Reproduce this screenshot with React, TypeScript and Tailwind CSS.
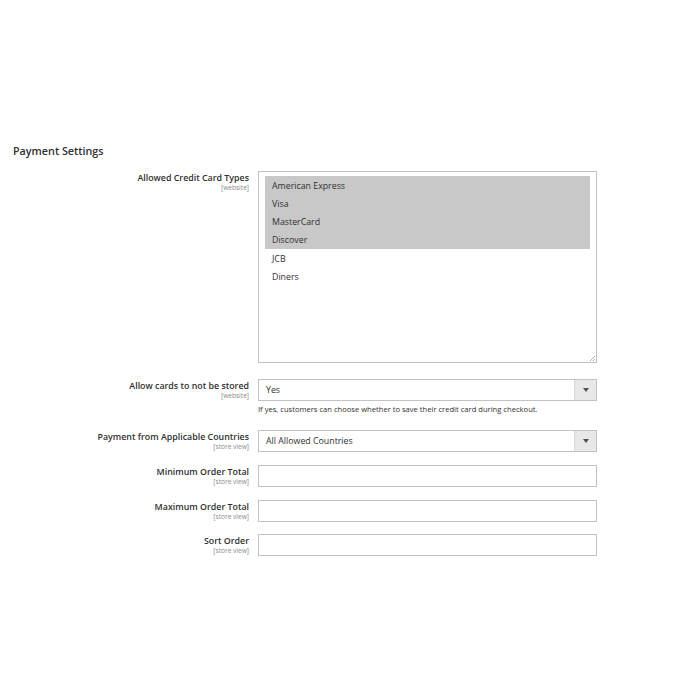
import React from 'react';

const font = { fontFamily: '"Open Sans", "Liberation Sans", sans-serif' };

const cardTypes = [
  { name: 'American Express', selected: true },
  { name: 'Visa', selected: true },
  { name: 'MasterCard', selected: true },
  { name: 'Discover', selected: true },
  { name: 'JCB', selected: false },
  { name: 'Diners', selected: false },
];

function Label({ title, scope }: { title: string; scope: string }) {
  return (
    <div className="flex w-[236px] shrink-0 flex-col items-end pt-[1px]">
      <span className="text-[8.85px] font-semibold leading-[12px] text-[#303030]">{title}</span>
      <span className="text-[6.6px] leading-[8px] text-[#8a8a8a]">{scope}</span>
    </div>
  );
}

function Select({ value }: { value: string }) {
  return (
    <div className="flex h-[22px] w-[339px] border border-[#c2c2c2] bg-white">
      <div className="flex flex-1 items-center pl-[7px] pt-[2px] text-[8.8px] text-[#303030]">{value}</div>
      <div className="flex w-[22px] items-center justify-center border-l border-[#d6d6d6] bg-[#e8e8e8]">
        <svg width="6" height="4" viewBox="0 0 6 4">
          <path d="M0 0 H6 L3 4 Z" fill="#505050" />
        </svg>
      </div>
    </div>
  );
}

function TextInput() {
  return <div className="h-[22px] w-[339px] border border-[#c2c2c2] bg-white" />;
}

export default function App() {
  return (
    <div className="min-h-[700px] w-[700px] bg-white" style={font}>
      <div className="flex flex-col pl-[13px] pt-[143px]">
        <h2 className="text-[10.75px] font-semibold leading-[16px] text-[#303030]">Payment Settings</h2>

        {/* Allowed credit card types */}
        <div className="mt-[12px] flex gap-[9px]">
          <Label title="Allowed Credit Card Types" scope="[website]" />
          <div className="relative h-[192px] w-[339px] border border-[#c2c2c2] bg-white px-[6px] pt-[4px]">
            {cardTypes.map((c) => (
              <div
                key={c.name}
                className={`flex h-[18.3px] items-center pl-[7px] pt-[2px] text-[8.8px] text-[#303030] ${
                  c.selected ? 'bg-[#c8c8c8]' : ''
                }`}
              >
                {c.name}
              </div>
            ))}
            <svg className="absolute bottom-[1px] right-[1px]" width="6" height="6" viewBox="0 0 6 6">
              <path d="M6 1 L1 6 M6 4 L4 6" stroke="#9a9a9a" strokeWidth="0.8" />
            </svg>
          </div>
        </div>

        {/* Allow cards to not be stored */}
        <div className="mt-[16px] flex gap-[9px]">
          <Label title="Allow cards to not be stored" scope="[website]" />
          <div className="flex flex-col">
            <Select value="Yes" />
            <p className="mt-[3px] text-[7.6px] leading-[10px] text-[#303030]">
              If yes, customers can choose whether to save their credit card during checkout.
            </p>
          </div>
        </div>

        <div className="mt-[16px] flex gap-[9px]">
          <Label title="Payment from Applicable Countries" scope="[store view]" />
          <Select value="All Allowed Countries" />
        </div>

        <div className="mt-[13px] flex gap-[9px]">
          <Label title="Minimum Order Total" scope="[store view]" />
          <TextInput />
        </div>

        <div className="mt-[13px] flex gap-[9px]">
          <Label title="Maximum Order Total" scope="[store view]" />
          <TextInput />
        </div>

        <div className="mt-[12px] flex gap-[9px]">
          <Label title="Sort Order" scope="[store view]" />
          <TextInput />
        </div>
      </div>
    </div>
  );
}
